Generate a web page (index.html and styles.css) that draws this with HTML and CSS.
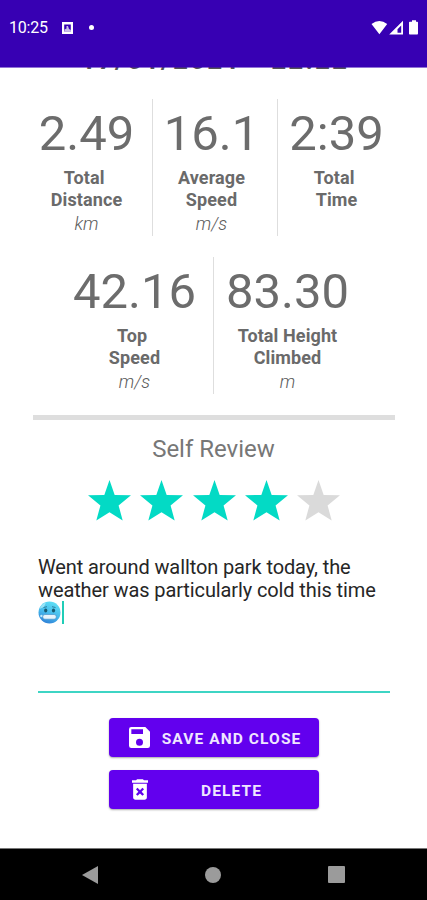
FILE: index.html
```html
<!DOCTYPE html>
<html lang="en">
<head>
<meta charset="utf-8">
<title>Ride summary</title>
<link rel="stylesheet" href="styles.css">
</head>
<body>
<div class="screen">
  <header class="status">
    <span class="clock">10:25</span>
    <svg class="notif" width="11" height="12" viewBox="0 0 11 12"><path fill="#fff" fill-rule="evenodd" d="M0 0h11v12H0zM2.200 2.500v7h6.600v-7z"/><path fill="#fff" d="M2.500 9.500V7.500L4.500 6.500V4h1.500l1 3 1.800 1v1.500z" opacity=".75"/></svg>
    <span class="dot"></span>
    <span class="signals">
      <svg width="49" height="16" viewBox="0 0 49 16"><path fill="#fff" d="M.5 4Q8.300-1.800 16.200 4L8.400 14.200zM18.200 14.500 32 .8v13.700zM26.500 12.700h3.700V5.500l-3.700 3.700zM39 1.800h2V.3h4v1.500h1.200q.8 0 .8.800v11q0 .9-.8.900h-7.400q-.8 0-.8-.9v-11q0-.8.8-.8z" fill-rule="evenodd"/></svg>
    </span>
  </header>

  <main class="content">
    <h1 class="date">17/01/2021 - 22:22</h1>

    <section class="stats three">
      <div class="stat"><div class="num">2.49</div><div class="label">Total&nbsp;<br>Distance</div><div class="unit">km</div></div>
      <div class="stat"><div class="num">16.1</div><div class="label">Average<br>Speed</div><div class="unit">m/s</div></div>
      <div class="stat"><div class="num">2:39</div><div class="label">Total&nbsp;<br>Time</div></div>
    </section>

    <section class="stats two">
      <div class="stat"><div class="num">42.16</div><div class="label">Top&nbsp;<br>Speed</div><div class="unit">m/s</div></div>
      <div class="stat"><div class="num">83.30</div><div class="label">Total Height<br>Climbed</div><div class="unit">m</div></div>
    </section>

    <div class="rule"></div>
    <h2 class="review">Self Review</h2>

    <div class="stars">
      <svg class="star" viewBox="0 0 44 42"><path d="M22 0 27.300 15.300 44 15.700 31.300 26 35.500 41.500 22 33 8.500 41.500 12.700 26 0 15.700 16.700 15.300z"/></svg>
      <svg class="star" viewBox="0 0 44 42"><path d="M22 0 27.300 15.300 44 15.700 31.300 26 35.500 41.500 22 33 8.500 41.500 12.700 26 0 15.700 16.700 15.300z"/></svg>
      <svg class="star" viewBox="0 0 44 42"><path d="M22 0 27.300 15.300 44 15.700 31.300 26 35.500 41.500 22 33 8.500 41.500 12.700 26 0 15.700 16.700 15.300z"/></svg>
      <svg class="star" viewBox="0 0 44 42"><path d="M22 0 27.300 15.300 44 15.700 31.300 26 35.500 41.500 22 33 8.500 41.500 12.700 26 0 15.700 16.700 15.300z"/></svg>
      <svg class="star off" viewBox="0 0 44 42"><path d="M22 0 27.300 15.300 44 15.700 31.300 26 35.500 41.500 22 33 8.500 41.500 12.700 26 0 15.700 16.700 15.300z"/></svg>
    </div>

    <div class="note">
      <div>Went around wallton park today, the<br>weather was particularly cold this time</div>
      <div class="last">
        <svg width="23" height="23" viewBox="0 0 23 23">
          <defs><linearGradient id="ice" x1=".7" y1="0" x2=".3" y2="1"><stop offset="0" stop-color="#5fe0f5"/><stop offset=".55" stop-color="#45b9ec"/><stop offset="1" stop-color="#2f7fd6"/></linearGradient></defs>
          <circle cx="11.500" cy="11.500" r="11" fill="url(#ice)"/>
          <path d="M1.500 8Q3 3 8 1.500L6 6z" fill="#b5f0fb" opacity=".7"/>
          <circle cx="3.500" cy="15" r="1.300" fill="#bfeafa"/>
          <path d="M5.500 6.500 9 5.700M14 5.700l3.500.8" stroke="#2b7f9e" stroke-width="1"/>
          <ellipse cx="7.700" cy="9.500" rx="1.600" ry="2" fill="#175a70"/><ellipse cx="15.500" cy="9.500" rx="1.600" ry="2" fill="#175a70"/>
          <rect x="4.700" y="13.500" width="13.600" height="4.700" rx="2.200" fill="#e6f4fc" stroke="#4795cb" stroke-width=".7"/>
        </svg>
        <span class="caret"></span>
      </div>
    </div>

    <div class="actions">
      <button class="btn"><svg class="icon save" viewBox="3 3 18 18"><path d="M17 3H5a2 2 0 0 0-2 2v14a2 2 0 0 0 2 2h14a2 2 0 0 0 2-2V7zm-5 16a3 3 0 1 1 0-6 3 3 0 0 1 0 6zm3-10H5V5h10z"/></svg><span>SAVE AND CLOSE</span></button>
      <button class="btn"><svg class="icon trash" viewBox="5 3 14 18"><path d="M6 19c0 1.100.9 2 2 2h8c1.100 0 2-.9 2-2V7H6zm2.460-7.120 1.410-1.410L12 12.590l2.120-2.120 1.410 1.410L13.410 14l2.120 2.120-1.410 1.410L12 15.410l-2.120 2.120-1.410-1.410L10.590 14zM15.500 4l-1-1h-5l-1 1H5v2h14V4z"/></svg><span>DELETE</span></button>
    </div>
  </main>

  <nav class="navbar">
    <svg width="16" height="18" viewBox="0 0 16 18"><path d="M0 9 16 0v18z"/></svg>
    <svg width="16" height="16" viewBox="0 0 16 16"><circle cx="8" cy="8" r="8"/></svg>
    <svg width="17" height="17" viewBox="0 0 17 17"><rect width="17" height="17" rx="1"/></svg>
  </nav>
</div>
</body>
</html>
```
FILE: styles.css
```css
* { box-sizing: border-box; }
body { margin: 0; background: #fff; font-family: Roboto, "Liberation Sans", sans-serif; color: #6c6c6c; }
.screen { width: 427px; height: 900px; display: flex; flex-direction: column; overflow: hidden; }

.status { position: relative; z-index: 1; flex: none; height: 68px; padding: 0 7px 12px 9px; display: flex; align-items: center; background: #3700b3; background-clip: padding-box; border-bottom: 1px solid rgba(55,0,179,.55); color: #fff; }
.clock { width: 53px; font-size: 16px; line-height: 20px; letter-spacing: -0.2px; }
.notif { display: block; }
.dot { width: 5px; height: 5px; margin-left: 16px; border-radius: 50%; background: #fff; }
.signals { margin-left: auto; display: flex; }

.content { flex: 1; min-height: 0; display: flex; flex-direction: column; }
.date { margin: -25px 0 0; height: 29px; padding-left: 3px; font-size: 26px; line-height: 34px; font-weight: 700; letter-spacing: 2.2px; text-align: center; white-space: nowrap; color: #555; }

.stats { display: grid; height: 137px; text-align: center; }
.three { margin: 27px 25px 0 21px; grid-template-columns: 131px 125px 125px; }
.two { margin: 21px 66px 0 56px; grid-template-columns: 157px 148px; }
.stat + .stat { border-left: 1px solid #dedede; }
.three .stat + .stat { padding-right: 7px; }
.num { height: 68px; font-size: 49px; line-height: 70px; font-weight: 400; letter-spacing: 0; white-space: nowrap; }
.label { font-size: 18px; line-height: 21.500px; font-weight: 700; letter-spacing: .1px; color: #6a6a6a; white-space: nowrap; }
.unit { margin-top: 3px; font-size: 18px; line-height: 22px; font-style: italic; font-weight: 300; color: #5c5c5c; }

.rule { flex: none; height: 5px; margin: 21px 32px 0 33px; background: #dedede; }
.review { margin: 13px 0 1px; font-size: 24px; line-height: 32px; font-weight: 400; text-align: center; color: #777; }
.stars { margin: 14px 0 0 88px; display: flex; gap: 9.300px; height: 42px; }
.star { width: 43px; height: 41px; fill: #03dac5; }
.off { fill: #dadada; }

.note { flex: none; height: 138px; margin: 33px 37px 0 38px; padding-top: 1px; border-bottom: 2px solid #3dd5c4; font-size: 20px; line-height: 23px; letter-spacing: -0.11px; color: #262626; white-space: nowrap; }
.last { display: flex; margin-top: -1px; }
.caret { width: 2px; height: 23px; margin-left: 1px; background: #20cdb7; }

.actions { margin: 25px 108px 0 109px; display: flex; flex-direction: column; gap: 13px; }
.btn { display: flex; align-items: center; height: 39px; padding: 0 17px 0 20px; border: 0; border-radius: 4px; background: #6200ee; box-shadow: 0 1px 2px rgba(0,0,0,.35); color: #efe6ff; font: 700 15.500px/20px Roboto, "Liberation Sans", sans-serif; letter-spacing: 1.1px; white-space: nowrap; }
.btn span { flex: 1; padding-top: 2px; text-align: center; }
.icon { flex: none; fill: #fff; margin-right: 11px; }
.save { width: 21px; height: 21px; }
.trash { width: 16px; height: 21px; margin-left: 3px; margin-right: 13px; }

.navbar { flex: none; height: 52px; background: #000; border-top: 1px solid #777; display: flex; align-items: center; justify-content: space-between; padding: 0 82px; fill: #9b9b9b; }
```
